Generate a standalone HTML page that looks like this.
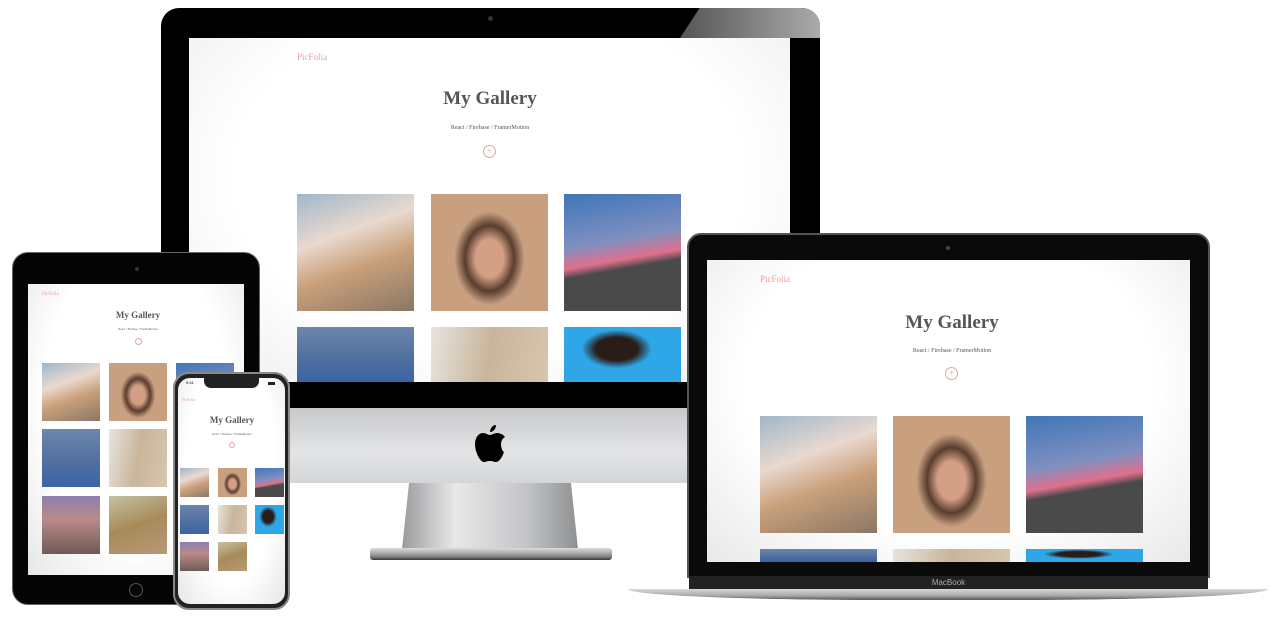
<!DOCTYPE html><html style="width:1276px;height:621px;overflow:hidden"><head><style>
*{margin:0;padding:0;box-sizing:border-box}
body{width:1276px;height:621px;background:#fff;position:relative;overflow:hidden;font-family:"Liberation Serif",serif}
.a{position:absolute}
.t{position:absolute;text-align:center;color:#555;font-weight:bold;white-space:nowrap;transform:translateX(-50%)}
.s{position:absolute;color:#555;white-space:nowrap;transform:translateX(-50%)}
.pk{position:absolute;color:#e9a0a0;white-space:nowrap}
.pl{position:absolute;border:1px solid #e9a0a0;border-radius:50%;color:#e9a0a0;text-align:center}
.p1{background:linear-gradient(160deg,#9fb7c9 0%,#e9d9cf 35%,#c9a07a 60%,#8a7766 100%)}
.p2{background:radial-gradient(ellipse 30% 40% at 50% 55%,#d4a085 0 40%,#5a3d2e 70%,#c8a080 100%)}
.p3{background:linear-gradient(170deg,#3f76b8 0%,#7f8fc0 40%,#e0708c 55%,#4a4a4a 62%)}
.p4{background:linear-gradient(180deg,#6c86ad,#4f6e9e 60%,#3a64a8)}
.p5{background:linear-gradient(100deg,#e7e4df,#c8b59a 50%,#d8c5ae)}
.p6{background:radial-gradient(ellipse 30% 35% at 45% 40%,#2a1d18 0 60%,#2ea6e8 100%)}
.p7{background:linear-gradient(180deg,#8d7fb0,#b98a8a 40%,#6e5a55)}
.p8{background:linear-gradient(160deg,#c5c1a0,#a88a5a 50%,#b79a78)}
</style></head><body>

<!-- iMac -->
<div class="a" style="left:161px;top:8px;width:659px;height:400px;background:#000;border-radius:18px 18px 0 0"></div>
<div class="a" style="left:680px;top:8px;width:140px;height:30px;background:linear-gradient(90deg,#555,#aaa);clip-path:polygon(14% 0,100% 0,100% 100%,0 100%);border-radius:0 18px 0 0"></div>
<div class="a" style="left:488px;top:16px;width:5px;height:5px;border-radius:50%;background:#333"></div>
<div class="a" style="left:189px;top:38px;width:601px;height:344px;background:radial-gradient(ellipse at 50% 40%,#fff 60%,#ececec);overflow:hidden">
  <div class="pk" style="left:108px;top:14px;font-size:9px">PicFolia</div>
  <div class="t" style="left:301px;top:50px;font-size:19px">My Gallery</div>
  <div class="s" style="left:301px;top:87px;font-size:6px">React / Firebase / FramerMotion</div>
  <div class="pl" style="left:294px;top:107px;width:13px;height:13px;font-size:9px;line-height:11px">+</div>
  <div class="a p1" style="left:108px;top:156px;width:117px;height:117px"></div>
  <div class="a p2" style="left:242px;top:156px;width:117px;height:117px"></div>
  <div class="a p3" style="left:375px;top:156px;width:117px;height:117px"></div>
  <div class="a p4" style="left:108px;top:289px;width:117px;height:55px"></div>
  <div class="a p5" style="left:242px;top:289px;width:117px;height:55px"></div>
  <div class="a p6" style="left:375px;top:289px;width:117px;height:55px"></div>
</div>
<div class="a" style="left:161px;top:408px;width:530px;height:75px;background:linear-gradient(180deg,#c8c9cb,#e3e4e6 60%,#d4d5d7)"></div>
<svg class="a" style="left:474px;top:423px" width="34" height="40" viewBox="0 0 34 40"><path d="M22 2c0 4-3 7-6 7 0-4 3-7 6-7zM27 21c0-5 4-7 4-7-2-3-6-4-8-4-3 0-5 2-7 2s-4-2-7-2C5 10 1 14 1 21c0 8 5 18 9 18 2 0 3-1 6-1s4 1 6 1c4 0 7-7 8-10-2-1-3-5-3-8z" fill="#000"/></svg>
<div class="a" style="left:402px;top:483px;width:176px;height:66px;background:linear-gradient(90deg,#9a9b9d,#e8e8e9 30%,#c4c5c7 70%,#8f9092);clip-path:polygon(4% 0,96% 0,100% 100%,0 100%)"></div>
<div class="a" style="left:370px;top:548px;width:242px;height:12px;border-radius:3px;background:linear-gradient(180deg,#ddd,#888 70%,#333)"></div>

<!-- Laptop -->
<div class="a" style="left:687px;top:233px;width:523px;height:345px;background:#0a0a0a;border-radius:14px 14px 0 0;border:2px solid #555"></div>
<div class="a" style="left:946px;top:246px;width:4px;height:4px;border-radius:50%;background:#444"></div>
<div class="a" style="left:707px;top:260px;width:483px;height:302px;background:radial-gradient(ellipse at 50% 40%,#fff 60%,#e8e8e8);overflow:hidden">
  <div class="pk" style="left:53px;top:14px;font-size:9px">PicFolia</div>
  <div class="t" style="left:245px;top:52px;font-size:19px">My Gallery</div>
  <div class="s" style="left:245px;top:88px;font-size:6px">React / Firebase / FramerMotion</div>
  <div class="pl" style="left:238px;top:107px;width:13px;height:13px;font-size:9px;line-height:11px">+</div>
  <div class="a p1" style="left:53px;top:156px;width:117px;height:117px"></div>
  <div class="a p2" style="left:186px;top:156px;width:117px;height:117px"></div>
  <div class="a p3" style="left:319px;top:156px;width:117px;height:117px"></div>
  <div class="a p4" style="left:53px;top:289px;width:117px;height:13px"></div>
  <div class="a p5" style="left:186px;top:289px;width:117px;height:13px"></div>
  <div class="a p6" style="left:319px;top:289px;width:117px;height:13px"></div>
</div>
<div class="a" style="left:689px;top:576px;width:519px;height:13px;background:#222;color:#aaa;font-family:'Liberation Sans',sans-serif;font-size:8px;text-align:center;line-height:13px">MacBook</div>
<div class="a" style="left:628px;top:589px;width:640px;height:11px;background:linear-gradient(180deg,#d7d8da,#a8a9ab 60%,#555);border-radius:0 0 40% 40%/0 0 100% 100%"></div>

<!-- iPad -->
<div class="a" style="left:12px;top:252px;width:248px;height:353px;background:#050505;border-radius:16px;border:1px solid #666"></div>
<div class="a" style="left:135px;top:267px;width:4px;height:4px;border-radius:50%;background:#333"></div>
<div class="a" style="left:129px;top:583px;width:14px;height:14px;border-radius:50%;border:1px solid #555"></div>
<div class="a" style="left:28px;top:284px;width:216px;height:291px;background:radial-gradient(ellipse at 50% 40%,#fff 60%,#e6e6e6);overflow:hidden">
  <div class="pk" style="left:14px;top:8px;font-size:5px">PicFolia</div>
  <div class="t" style="left:110px;top:26px;font-size:9px">My Gallery</div>
  <div class="s" style="left:110px;top:43px;font-size:3px">React / Firebase / FramerMotion</div>
  <div class="pl" style="left:107px;top:54px;width:7px;height:7px"></div>
  <div class="a p1" style="left:14px;top:79px;width:58px;height:58px"></div>
  <div class="a p2" style="left:81px;top:79px;width:58px;height:58px"></div>
  <div class="a p3" style="left:148px;top:79px;width:58px;height:58px"></div>
  <div class="a p4" style="left:14px;top:145px;width:58px;height:58px"></div>
  <div class="a p5" style="left:81px;top:145px;width:58px;height:58px"></div>
  <div class="a p7" style="left:14px;top:212px;width:58px;height:58px"></div>
  <div class="a p8" style="left:81px;top:212px;width:58px;height:58px"></div>
</div>

<!-- Phone -->
<div class="a" style="left:173px;top:372px;width:117px;height:238px;background:#222;border-radius:16px;border:2px solid #8a8a8a"></div>
<div class="a" style="left:178px;top:378px;width:107px;height:226px;background:radial-gradient(ellipse at 50% 40%,#fff 60%,#e6e6e6);border-radius:12px;overflow:hidden">
  <div class="a" style="left:26px;top:0;width:55px;height:10px;background:#222;border-radius:0 0 7px 7px"></div>
  <div class="a" style="left:8px;top:2px;font-size:4px;font-family:'Liberation Sans',sans-serif">9:41</div>
  <div class="a" style="left:90px;top:4px;width:7px;height:3px;background:#222"></div>
  <div class="pk" style="left:4px;top:19px;font-size:4px">PicFolia</div>
  <div class="t" style="left:54px;top:37px;font-size:9px">My Gallery</div>
  <div class="s" style="left:54px;top:54px;font-size:3px">React / Firebase / FramerMotion</div>
  <div class="pl" style="left:51px;top:64px;width:6px;height:6px"></div>
  <div class="a p1" style="left:2px;top:90px;width:29px;height:29px"></div>
  <div class="a p2" style="left:40px;top:90px;width:29px;height:29px"></div>
  <div class="a p3" style="left:77px;top:90px;width:29px;height:29px"></div>
  <div class="a p4" style="left:2px;top:127px;width:29px;height:29px"></div>
  <div class="a p5" style="left:40px;top:127px;width:29px;height:29px"></div>
  <div class="a p6" style="left:77px;top:127px;width:29px;height:29px"></div>
  <div class="a p7" style="left:2px;top:164px;width:29px;height:29px"></div>
  <div class="a p8" style="left:40px;top:164px;width:29px;height:29px"></div>
</div>
</body></html>
